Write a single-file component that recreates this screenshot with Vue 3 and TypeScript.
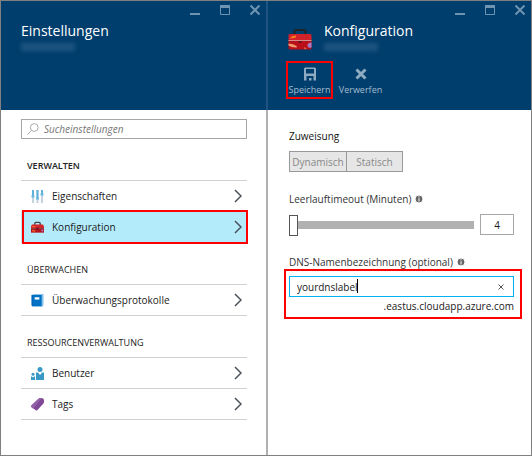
<script setup lang="ts">
import { ref } from 'vue'

type IconName = 'sliders' | 'toolbox' | 'book' | 'users' | 'tag'

interface Entry {
  label: string
  icon: IconName
  selected?: boolean
}

interface Section {
  title: string
  strong?: boolean
  entries: Entry[]
}

const sections: Section[] = [
  {
    title: 'VERWALTEN',
    strong: true,
    entries: [
      { label: 'Eigenschaften', icon: 'sliders' },
      { label: 'Konfiguration', icon: 'toolbox', selected: true },
    ],
  },
  { title: 'ÜBERWACHEN', entries: [{ label: 'Überwachungsprotokolle', icon: 'book' }] },
  {
    title: 'RESSOURCENVERWALTUNG',
    entries: [
      { label: 'Benutzer', icon: 'users' },
      { label: 'Tags', icon: 'tag' },
    ],
  },
]

const query = ref('')
const timeout = ref(4)
const dnsLabel = ref('yourdnslabel')
</script>

<template>
  <main class="portal">
    <section class="blade">
      <header class="head">
        <div class="window">
          <button type="button" aria-label="Minimieren"><svg viewBox="0 0 12 12"><path d="M1 10h10" stroke-width="2" /></svg></button>
          <button type="button" aria-label="Maximieren"><svg viewBox="0 0 12 12"><path d="M1.500 2v8.500h9V2z" /><path d="M1 2.500h10" stroke-width="3" /></svg></button>
          <button type="button" aria-label="Schließen"><svg viewBox="0 0 12 12"><path d="M1.500 1.500l9 9M10.500 1.500l-9 9" stroke-width="2" /></svg></button>
        </div>
        <div class="heading">
          <div>
            <h1>Einstellungen</h1>
            <div class="redacted"></div>
          </div>
        </div>
      </header>

      <div class="body menu">
        <label class="search">
          <svg viewBox="0 0 12 12" aria-hidden="true"><circle cx="7.300" cy="4.500" r="3.900" /><path d="M4.500 7.300L.5 11.500" /></svg>
          <input v-model="query" type="text" placeholder="Sucheinstellungen" aria-label="Sucheinstellungen" />
        </label>

        <nav v-for="section in sections" :key="section.title">
          <h2 :class="{ strong: section.strong }">{{ section.title }}</h2>
          <ul>
            <li v-for="entry in section.entries" :key="entry.label" :class="{ selected: entry.selected }">
              <a href="#">
                <svg v-if="entry.icon === 'sliders'" class="icon" viewBox="0 0 13 13">
                  <path d="M2 0v13M6.500 0v13M11 0v13" stroke="#c3d3de" stroke-width="2" />
                  <path d="M2 0v6M6.500 0v8M11 0v4" stroke="#5fb0da" stroke-width="2" />
                  <path d="M.5 6.500h3M5 8.500h3M9.500 4.500h3" stroke="#68b7dd" stroke-width="2" />
                </svg>
                <svg v-else-if="entry.icon === 'toolbox'" class="icon" viewBox="0 0 24 21">
                  <path d="M7 6V3q0-2 2-2h6q2 0 2 2v3" fill="none" stroke="#444" stroke-width="2.500" />
                  <path d="M2 5h20l2 3v4H0V8z" fill="#d5252b" />
                  <path d="M0 12h24v8H0z" fill="#b5121b" />
                  <path d="M0 12h24" stroke="#7c4048" stroke-width="1.500" />
                  <path d="M2 9h6M2 16l6 1" stroke="#f4602a" stroke-width="2.500" />
                  <circle cx="21" cy="16" r="2" fill="#b07ac5" />
                  <path d="M10 11h4v3h-4z" fill="#6f1118" />
                </svg>
                <svg v-else-if="entry.icon === 'book'" class="icon" viewBox="0 0 13 14">
                  <path d="M2 0h11v12l-2 2H1V1z" fill="#8ac2e8" />
                  <path d="M0 1h11v12H1l-1-1z" fill="#0072c6" />
                  <path d="M3.500 3.500h5v2.500h-5z" fill="#fff" />
                  <path d="M1 1v12" stroke="#0062b1" />
                </svg>
                <svg v-else-if="entry.icon === 'users'" class="icon" viewBox="0 0 13 13">
                  <g fill="#3999c6">
                    <circle cx="9" cy="2.500" r="2.500" />
                    <path d="M5 5.500h2l2 2.500 2-2.500h2V13H5z" />
                    <circle cx="2" cy="7.300" r="1.500" />
                    <path d="M0 9.500h1l1 1 1-1h1V13H0z" />
                  </g>
                </svg>
                <svg v-else class="icon" viewBox="0 0 13 13">
                  <path d="M7.500.8Q8.500 0 9.500 0L11.500.3q1.500.3 1.500 2V4q0 1-1 2l-5.500 6q-1 1-2 0L.6 9.200q-1-1 0-2z" fill="#804998" />
                  <path d="M7.500.8L.6 7.200q-1 1 0 2l1.500 1.500L10.500.2q-2-.4-3 .6z" fill="#9560aa" />
                </svg>
                <span>{{ entry.label }}</span>
                <svg class="chevron" viewBox="0 0 8 14" aria-hidden="true"><path d="M1 1l6 6-6 6" /></svg>
              </a>
            </li>
          </ul>
        </nav>
      </div>
    </section>

    <section class="blade">
      <header class="head">
        <div class="window">
          <button type="button" aria-label="Minimieren"><svg viewBox="0 0 12 12"><path d="M1 10h10" stroke-width="2" /></svg></button>
          <button type="button" aria-label="Maximieren"><svg viewBox="0 0 12 12"><path d="M1.500 2v8.500h9V2z" /><path d="M1 2.500h10" stroke-width="3" /></svg></button>
          <button type="button" aria-label="Schließen"><svg viewBox="0 0 12 12"><path d="M1.500 1.500l9 9M10.500 1.500l-9 9" stroke-width="2" /></svg></button>
        </div>
        <div class="heading">
          <svg class="badge" viewBox="0 0 24 21" aria-hidden="true">
            <path d="M6.500 6V2.500Q6.500 1 8 1h8q1.500 0 1.500 1.500V6" fill="none" stroke="#1f2326" stroke-width="2" />
            <path d="M2 5h20q1.500 0 1.500 1.500V12H.5V6.500Q.5 5 2 5z" fill="#d2222a" />
            <path d="M.5 12h23v7q0 1.500-1.500 1.500H2Q.5 20.500.5 19z" fill="#b9101a" />
            <path d="M.5 11.500h23" stroke="#d78c8c" />
            <path d="M10 12h4l-1 2h-2z" fill="#6f1118" />
            <path d="M2 9.500Q3 6.500 8 6.500q1 1-1 2.500z" fill="#f47920" />
            <path d="M.5 14.500q5 0 8 2.500 1 1.500-1 1.500-4 0-7-2z" fill="#f19a6c" />
            <path d="M23.500 13.500v5q-4 1-4-2t4-3z" fill="#a87bc7" />
            <path d="M16.500 18l2 1.500-2 1z" fill="#ef8050" />
          </svg>
          <div>
            <h1>Konfiguration</h1>
            <div class="redacted"></div>
          </div>
        </div>
        <div class="commands">
          <button type="button" class="marked">
            <svg viewBox="0 0 14 14" aria-hidden="true">
              <path d="M1 13.500V1.500L2 .5h10l1 1v12h-2.500V9h-7v4.500zM3 2v4.500h8V2z" fill-rule="evenodd" class="solid" />
              <path d="M6 11h2.500v2.500H6z" class="solid" />
            </svg>
            Speichern
          </button>
          <button type="button">
            <svg viewBox="0 0 14 14" aria-hidden="true"><path d="M2.500 2.500l9 9M11.500 2.500l-9 9" stroke-width="3" /></svg>
            Verwerfen
          </button>
        </div>
      </header>

      <form class="body form" @submit.prevent>
        <div class="field">
          <span id="assign" class="caption dark">Zuweisung</span>
          <div class="toggle" role="group" aria-labelledby="assign">
            <button type="button" disabled>Dynamisch</button>
            <button type="button" disabled>Statisch</button>
          </div>
        </div>

        <div class="field">
          <label class="caption" for="timeout">
            Leerlauftimeout (Minuten)
            <svg class="info" viewBox="0 0 8 8" aria-hidden="true"><circle cx="4" cy="4" r="4" /><path d="M4 1.300v1.200M4 3.300v3.200" /></svg>
          </label>
          <div class="range">
            <input id="timeout" v-model.number="timeout" type="range" min="4" max="30" />
            <input v-model.number="timeout" class="value" type="text" aria-label="Minuten" />
          </div>
        </div>

        <div class="field joined">
          <label class="caption" for="dns">
            DNS-Namenbezeichnung (optional)
            <svg class="info" viewBox="0 0 8 8" aria-hidden="true"><circle cx="4" cy="4" r="4" /><path d="M4 1.300v1.200M4 3.300v3.200" /></svg>
          </label>
          <div class="dns">
            <div class="entry">
              <input id="dns" v-model="dnsLabel" type="text" />
              <i class="caret"></i>
              <button type="button" aria-label="Löschen" @click="dnsLabel = ''">
                <svg viewBox="0 0 6 6"><path d="M.5.5l5 5M5.500.5l-5 5" /></svg>
              </button>
            </div>
            <span class="suffix">.eastus.cloudapp.azure.com</span>
          </div>
        </div>
      </form>
    </section>
  </main>
</template>

<style>
body {
  margin: 0;
}
</style>

<style scoped>
* {
  box-sizing: border-box;
}
.portal {
  display: grid;
  grid-template-columns: 1fr 1fr;
  min-height: 100vh;
  border: 1px solid #808080;
  background: #fff;
  color: #1a1a1a;
  font: 10px/14px "Open Sans", "Noto Sans", sans-serif;
}
.blade {
  display: flex;
  flex-direction: column;
  min-width: 0;
}
.blade + .blade .head {
  border-left: 2px solid #1f5480;
}
.blade + .blade .body {
  border-left: 2px solid #b0b0b0;
}
button,
input {
  margin: 0;
  padding: 0;
  border: 0;
  background: none;
  color: inherit;
  font: inherit;
}
h1,
h2,
ul {
  margin: 0;
  padding: 0;
  list-style: none;
}
svg {
  display: block;
  flex: none;
}
.head {
  height: 109px;
  background: #003e6d;
  color: #fff;
}
.window {
  display: flex;
  justify-content: flex-end;
  gap: 18px;
  height: 20px;
  padding: 3px 5px 0 0;
}
.window svg {
  width: 12px;
  height: 12px;
  fill: none;
  stroke: #6f94b1;
}
.window button {
  height: 12px;
}
.heading {
  display: flex;
  gap: 12px;
  padding-left: 20px;
  height: 40px;
}
h1 {
  font: 400 14px/20px "Open Sans", "Noto Sans", sans-serif;
}
.badge {
  width: 24px;
  height: 21px;
  margin-top: 8px;
}
.redacted {
  width: 54px;
  height: 8px;
  margin-top: 2px;
  background: #1d5480;
  filter: blur(2px);
}
.commands {
  display: flex;
  gap: 4px;
  padding-left: 18px;
}
.commands button {
  display: flex;
  flex-direction: column;
  align-items: center;
  gap: 2px;
  width: 47px;
  height: 38px;
  padding-top: 4px;
  border: 2px solid transparent;
  color: #a5bccf;
  font-size: 9px;
  line-height: 14px;
}
.commands .marked {
  border-color: #f00;
}
.commands svg {
  width: 14px;
  height: 14px;
  stroke: #8fabc2;
}
.commands .solid {
  fill: #8fabc2;
  stroke: none;
}
.body {
  flex: 1;
}
.menu {
  padding: 9px 19px 9px 20px;
}
.search {
  display: flex;
  align-items: center;
  gap: 5px;
  height: 20px;
  padding: 0 5px;
  border: 1px solid #a6a6a6;
}
.search svg {
  width: 12px;
  height: 12px;
  fill: none;
  stroke: #aaa;
}
.search input {
  flex: 1;
  min-width: 0;
  outline: 0;
}
.search input::placeholder {
  color: #767676;
  font-style: italic;
  opacity: 1;
}
h2 {
  padding: 20px 6px 7px;
  color: #222;
  font: 500 9px/14px "Open Sans", "Noto Sans", sans-serif;
}
h2.strong {
  font-weight: 600;
}
ul {
  border-top: 1px solid #d0d0d0;
}
li {
  position: relative;
  border-bottom: 1px solid #d0d0d0;
}
li a {
  display: flex;
  align-items: center;
  gap: 8px;
  height: 30px;
  padding: 0 5px 0 10px;
  color: #1a1a1a;
  text-decoration: none;
}
li span {
  flex: 1;
}
.selected {
  background: #b4ebfa;
}
.selected::after {
  position: absolute;
  inset: -2px -1px -2px 1px;
  border: 2px solid #f00;
  content: "";
}
.icon {
  width: 13px;
  height: 13px;
}
.chevron {
  width: 8px;
  height: 14px;
  fill: none;
  stroke: #4a535c;
  stroke-width: 1.500;
}
.form {
  display: flex;
  flex-direction: column;
  padding: 19px 17px 0 21px;
}
.field {
  display: flex;
  flex-direction: column;
  gap: 8px;
  margin-bottom: 20px;
}
.joined {
  gap: 0;
}
.caption {
  display: flex;
  align-items: center;
  gap: 4px;
  height: 14px;
  color: #333;
}
.dark {
  color: #111;
}
.info {
  width: 8px;
  height: 8px;
  fill: #666;
  stroke: #fff;
}
.toggle {
  display: grid;
  grid-template-columns: 1fr 1fr;
  width: 114px;
  height: 21px;
  border: 1px solid #999;
}
.toggle button {
  background: #e6e6e6;
  color: #888;
}
.toggle button + button {
  border-left: 1px solid #999;
}
.range {
  display: flex;
  gap: 6px;
  height: 21px;
}
.range input[type="range"] {
  flex: 1;
  min-width: 0;
  height: 21px;
  appearance: none;
}
.range input::-webkit-slider-runnable-track {
  height: 8px;
  background: #b1b1b1;
}
.range input::-webkit-slider-thumb {
  width: 9px;
  height: 21px;
  margin-top: -6px;
  appearance: none;
  border: 1px solid #555;
  background: #fff;
}
.range .value {
  width: 34px;
  border: 1px solid #a6a6a6;
  text-align: center;
}
.dns {
  display: flex;
  flex-direction: column;
  gap: 2px;
  margin: 0 -8px 0 -5px;
  padding: 5px 6px 4px 3px;
  border: 2px solid #f00;
}
.entry {
  position: relative;
  display: flex;
  align-items: center;
  height: 21px;
  padding: 0 9px 0 7px;
  border: 1px solid #00b3f0;
}
.entry input {
  flex: 1;
  min-width: 0;
  outline: 0;
}
.caret {
  position: absolute;
  top: 2px;
  left: 67px;
  width: 1px;
  height: 14px;
  background: #000;
}
.entry svg {
  width: 6px;
  height: 6px;
  stroke: #555;
}
.suffix {
  text-align: right;
}
</style>
